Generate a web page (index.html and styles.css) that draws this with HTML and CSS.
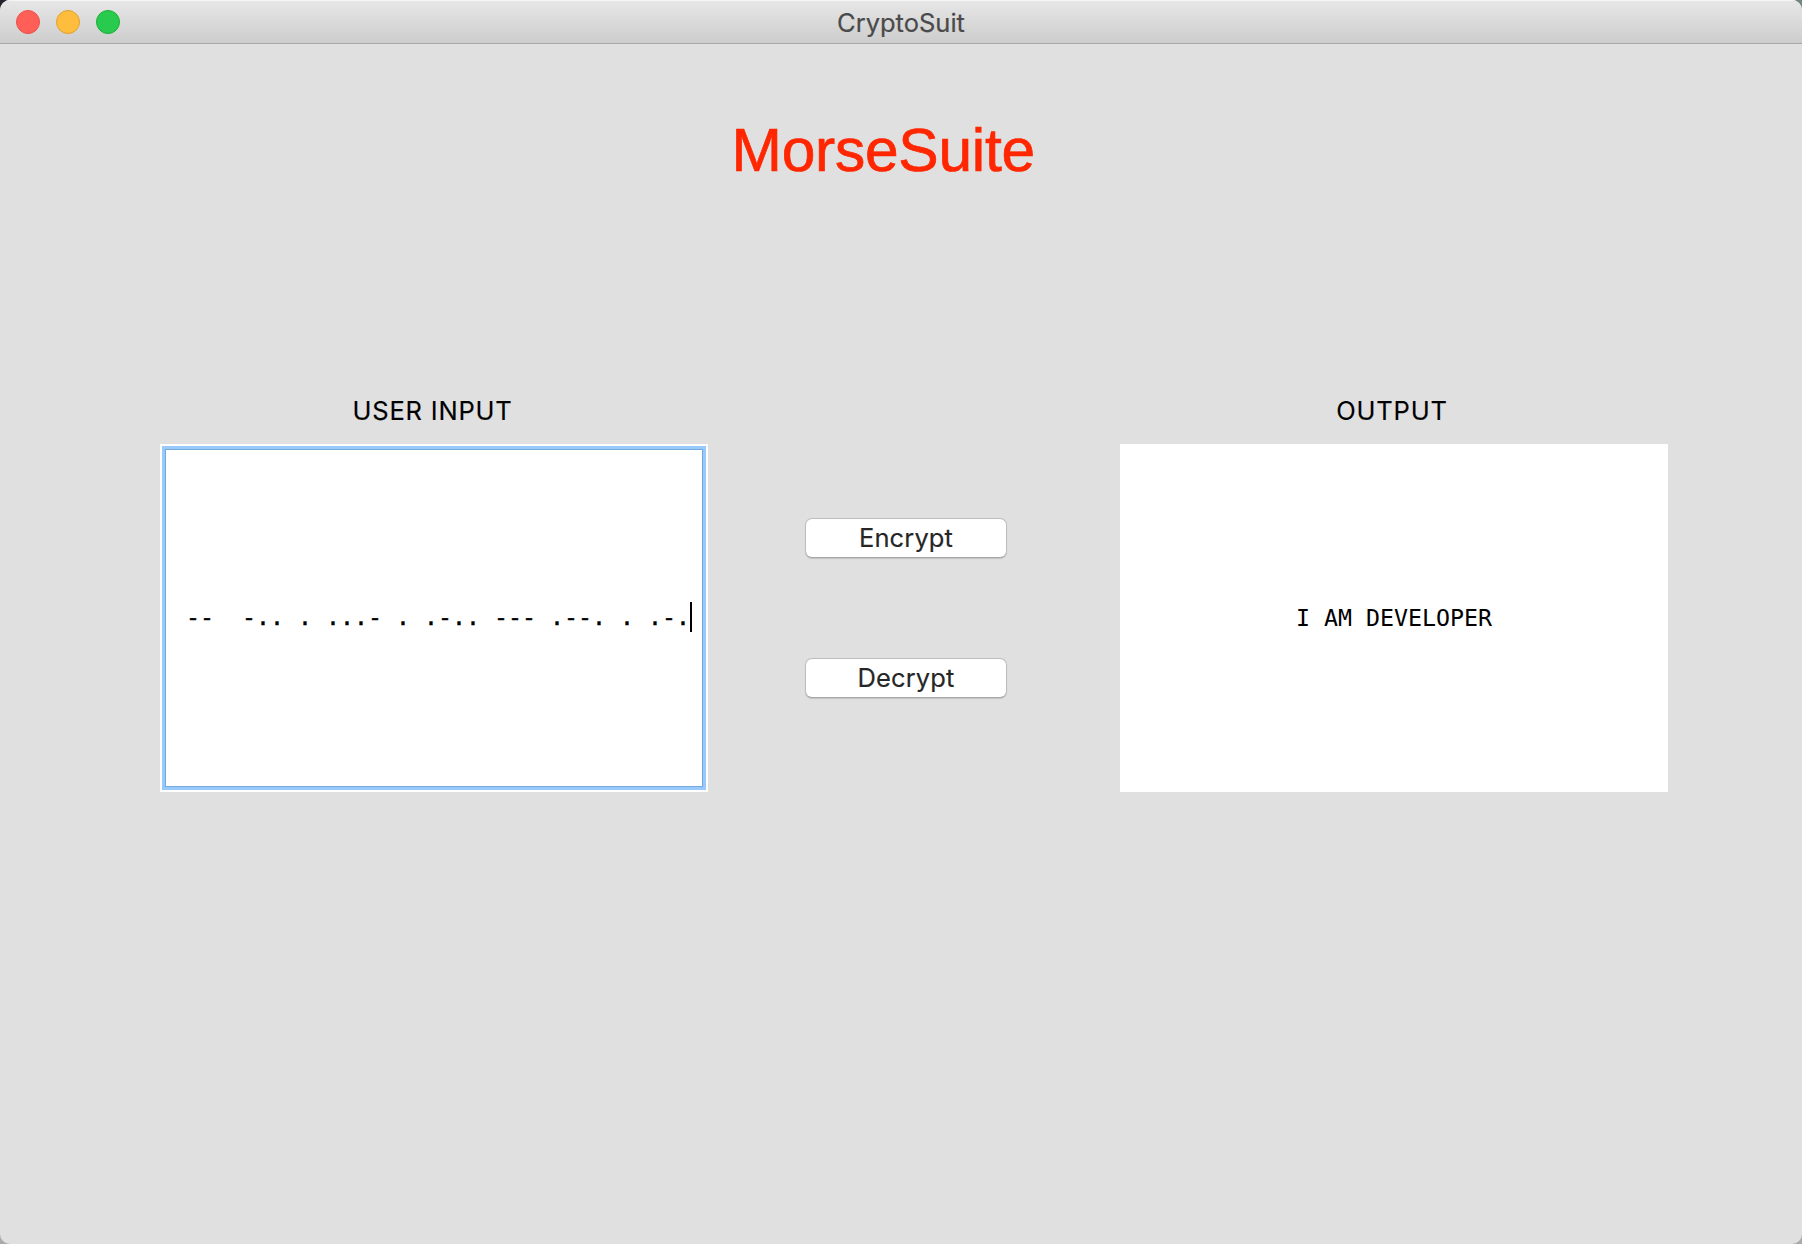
FILE: index.html
```html
<!DOCTYPE html>
<html lang="en">
<head>
<meta charset="utf-8">
<title>CryptoSuit</title>
<link rel="stylesheet" href="styles.css">
</head>
<body>
<div class="window">
  <header class="titlebar">
    <div class="lights">
      <span class="light close"></span>
      <span class="light minimize"></span>
      <span class="light maximize"></span>
    </div>
    <div class="window-title">CryptoSuit</div>
  </header>
  <main class="content">
    <h1 class="heading">MorseSuite</h1>
    <div class="panels">
      <section class="panel">
        <div class="label input-label">USER INPUT</div>
        <div class="field focused"><span class="mono morse">--  -.. . ...- . .-.. --- .--. . .-.</span><span class="caret"></span></div>
      </section>
      <div class="actions">
        <button class="button encrypt">Encrypt</button>
        <button class="button decrypt">Decrypt</button>
      </div>
      <section class="panel">
        <div class="label output-label">OUTPUT</div>
        <div class="field output"><span class="mono">I AM DEVELOPER</span></div>
      </section>
    </div>
  </main>
</div>
</body>
</html>
```
FILE: styles.css
```css
* { box-sizing: border-box; }
body {
  margin: 0;
  background: linear-gradient(90deg, #25232c, #71867c 100%) top / 100% 40px no-repeat, #aaa;
  font-family: Inter, "Liberation Sans", sans-serif;
}
.window {
  width: 1802px;
  height: 1244px;
  overflow: hidden;
  border-radius: 10px;
  background: #e0e0e0;
}
.titlebar {
  display: grid;
  grid-template-columns: 1fr auto 1fr;
  align-items: center;
  height: 44px;
  padding: 0 16px;
  background: linear-gradient(#e7e7e7, #cdcdcd);
  border-bottom: 1px solid #a8a8a8;
  box-shadow: inset 0 1px #f5f5f5;
}
.lights { display: flex; gap: 16px; }
.light { width: 24px; height: 24px; border-radius: 50%; border: 1px solid; }
.close { background: #ff5f57; border-color: #e9504a; }
.minimize { background: #ffbd3e; border-color: #dfa02f; }
.maximize { background: #28cb4d; border-color: #1cae34; }
.window-title {
  margin-bottom: -1px;
  padding-top: 1px;
  font-size: 25.5px;
  line-height: 44px;
  -webkit-text-stroke: 0.2px #4a4a4a;
  color: #4a4a4a;
}
.heading {
  margin: 73px 0 0 731.5px;
  font: 400 60.5px/67px "Liberation Sans", Arial, sans-serif;
  letter-spacing: -0.25px;
  -webkit-text-stroke: 0.7px #ff2600;
  color: #ff2600;
}
.panels {
  display: grid;
  grid-template-columns: 548px 412px 548px;
  padding: 211px 0 0 160px;
}
.label {
  height: 49px;
  font-size: 25.5px;
  line-height: 32px;
  letter-spacing: 0.8px;
  -webkit-text-stroke: 0.15px #000;
  text-align: center;
  color: #000;
}
.input-label { padding-right: 3px; }
.output-label { padding-right: 4px; }
.field {
  display: flex;
  align-items: center;
  height: 348px;
  background: #fff;
}
.focused {
  justify-content: flex-end;
  padding: 0 14px 2px 0;
  border: 2px solid #fff;
  box-shadow: inset 0 0 0 3px #98c9fb, inset 0 0 0 4px #73a9dc;
}
.output { justify-content: center; }
.mono {
  font: 23.25px/30px "DejaVu Sans Mono", monospace;
  white-space: pre;
  color: #000;
}
.morse { -webkit-text-stroke: 0.4px #000; }
.caret { width: 2px; height: 30px; background: #000; }
.actions {
  display: flex;
  flex-direction: column;
  gap: 100px;
  padding: 123px 0 0 97px;
}
.button {
  width: 202px;
  height: 40px;
  padding: 0;
  border: 1px solid #bdbdbd;
  border-bottom-color: #a6a6a6;
  border-radius: 7px;
  background: #fff;
  box-shadow: 0 1px 1px #0002;
  font: 25.5px/38px Inter, sans-serif;
  letter-spacing: 0.1px;
  -webkit-text-stroke: 0.15px #262626;
  color: #262626;
}
```
